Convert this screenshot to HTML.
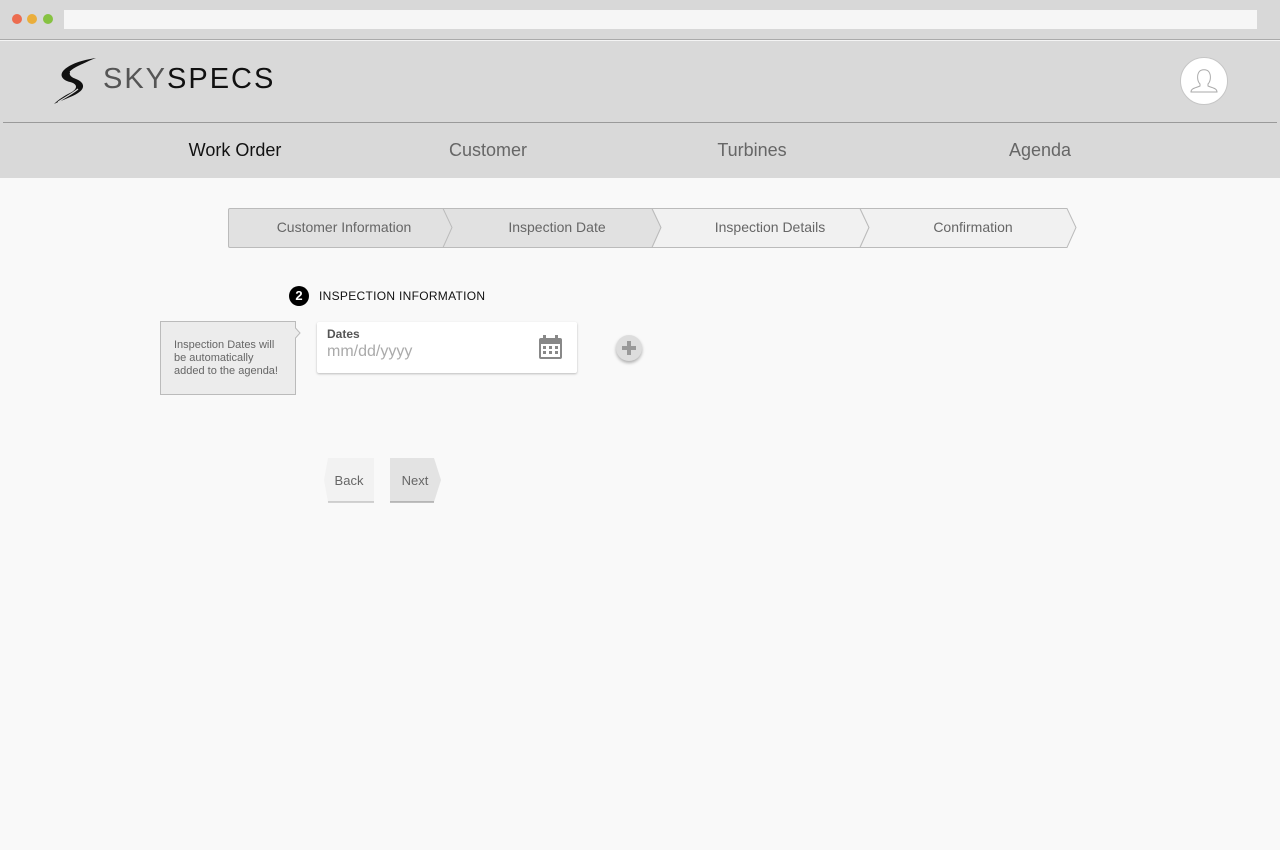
<!DOCTYPE html>
<html><head><meta charset="utf-8"><style>
*{margin:0;padding:0;box-sizing:border-box}
body{width:1280px;height:850px;background:#f9f9f9;font-family:"Liberation Sans",Arial,sans-serif;position:relative;overflow:hidden}
.chrome{position:absolute;left:0;top:0;width:1280px;height:40px;background:#d8d8d8;border-bottom:1px solid #aaa}
.dot{position:absolute;top:14px;width:10px;height:10px;border-radius:50%}
.url{position:absolute;left:64px;top:10px;width:1193px;height:19px;background:#f6f6f6}
.hdr{position:absolute;left:0;top:40px;width:1280px;height:138px;background:#d9d9d9;border-top:1px solid #f4f4f4}
.div{position:absolute;left:3px;top:122px;width:1274px;height:1px;background:#9a9a9a}
.nav{position:absolute;top:140px;font-size:18px;color:#666;transform:translateX(-50%)}
.t{position:absolute}
</style></head><body>
<div class="chrome">
<div class="dot" style="left:12px;background:#ec6c4f"></div>
<div class="dot" style="left:27px;background:#eaae3b"></div>
<div class="dot" style="left:43px;background:#86c241"></div>
<div class="url"></div>
</div>
<div class="hdr"></div>
<svg class="t" style="left:52px;top:56px" width="46" height="50" viewBox="0 0 46 50">
<path d="M44 2 C30 4 18 8 12 14 C7 19 10 24 18 26 C26 28 26 33 18 37 C12 40 6 44 2 48 C10 44 20 41 26 37 C34 32 32 26 24 23 C16 20 16 16 22 13 C28 9 36 5 44 2Z" fill="#111"/>
<path d="M40 6 C30 8 22 12 18 16" stroke="#d9d9d9" stroke-width="1.2" fill="none"/>
<path d="M26 33 C20 38 12 42 6 46" stroke="#d9d9d9" stroke-width="1.2" fill="none"/>
</svg>
<div class="t" style="left:103px;top:63px;font-size:29px;letter-spacing:2px;color:#555;font-weight:300">SKY<span style="color:#111;font-weight:normal">SPECS</span></div>
<div class="t" style="left:1180px;top:57px;width:48px;height:48px;border-radius:50%;background:#fff;border:1px solid #c6c6c6"></div>
<svg class="t" style="left:1180px;top:57px" width="48" height="48" viewBox="0 0 48 48"><path d="M20 27 C17 24 17 18 19 15 C21 12 27 12 29 15 C31 18 31 24 28 27 L28 29 C32 31 37 31 37 35 L11 35 C11 31 16 31 20 29Z" fill="none" stroke="#aaa" stroke-width="1"/></svg>
<div class="div"></div>
<div class="nav" style="left:235px;color:#111">Work Order</div>
<div class="nav" style="left:488px">Customer</div>
<div class="nav" style="left:752px">Turbines</div>
<div class="nav" style="left:1040px">Agenda</div>
<svg class="t" style="left:227px;top:207px" width="852" height="42" viewBox="0 0 852 42">
<path d="M1.5 3 Q1.5 1.5 3 1.5 L425 1.5 L434 20.5 L425 40.5 L3 40.5 Q1.5 40.5 1.5 39Z" fill="#e1e1e1" stroke="#bbb"/>
<path d="M216 1.5 L425 1.5 L434 20.5 L425 40.5 L216 40.5 L225 20.5Z" fill="#e1e1e1" stroke="#bbb"/>
<path d="M425 1.5 L633 1.5 L642 20.5 L633 40.5 L425 40.5 L434 20.5Z" fill="#f1f1f1" stroke="#bbb"/>
<path d="M633 1.5 L840 1.5 L849 20.5 L840 40.5 L633 40.5 L642 20.5Z" fill="#f1f1f1" stroke="#bbb"/>
<g font-family="Liberation Sans,Arial,sans-serif" font-size="14" fill="#666" text-anchor="middle">
<text x="117" y="25">Customer Information</text>
<text x="330" y="25">Inspection Date</text>
<text x="543" y="25">Inspection Details</text>
<text x="746" y="25">Confirmation</text></g>
</svg>
<div class="t" style="left:289px;top:286px;width:20px;height:20px;border-radius:50%;background:#000;color:#fff;font-size:13px;font-weight:bold;text-align:center;line-height:20px">2</div>
<div class="t" style="left:319px;top:289px;font-size:12px;letter-spacing:.3px;color:#111">INSPECTION INFORMATION</div>
<svg class="t" style="left:160px;top:321px" width="142" height="75" viewBox="0 0 142 75"><path d="M0.5 0.5 L135.5 0.5 L135.5 7 L140 12 L135.5 17 L135.5 73.5 L0.5 73.5Z" fill="#ececec" stroke="#bbb"/></svg>
<div class="t" style="left:174px;top:339px;font-size:11px;line-height:13px;color:#666;width:113px">Inspection Dates will be automatically added to the agenda!</div>
<div class="t" style="left:317px;top:322px;width:260px;height:51px;background:#fff;box-shadow:0 1px 2px rgba(0,0,0,.25);border-radius:2px"></div>
<div class="t" style="left:327px;top:327px;font-size:12px;font-weight:bold;color:#555">Dates</div>
<div class="t" style="left:327px;top:343px;font-size:16px;color:#aaa">mm/dd/yyyy</div>
<svg class="t" style="left:538px;top:334px" width="26" height="26" viewBox="0 0 26 26"><rect x="1" y="4" width="23" height="21" rx="2" fill="#888"/><rect x="5" y="1" width="3" height="6" fill="#888"/><rect x="17" y="1" width="3" height="6" fill="#888"/><rect x="3" y="10" width="19" height="13" fill="#fff"/><g fill="#888"><rect x="5" y="12" width="3" height="3"/><rect x="11" y="12" width="3" height="3"/><rect x="17" y="12" width="3" height="3"/><rect x="5" y="17" width="3" height="3"/><rect x="11" y="17" width="3" height="3"/><rect x="17" y="17" width="3" height="3"/></g></svg>
<div class="t" style="left:616px;top:335px;width:26px;height:26px;border-radius:50%;background:#ddd;box-shadow:0 2px 3px rgba(0,0,0,.3)"></div>
<div class="t" style="left:622px;top:346px;width:14px;height:4px;background:#999"></div>
<div class="t" style="left:627px;top:341px;width:4px;height:14px;background:#999"></div>
<svg class="t" style="left:322px;top:457px" width="122" height="48" viewBox="0 0 122 48">
<path d="M6 1 L52 1 L52 45 L6 45 L2 23Z" fill="#f2f2f2"/><path d="M6 45 L52 45" stroke="#aaa"/>
<path d="M68 1 L112 1 L119 23 L112 45 L68 45Z" fill="#e3e3e3"/><path d="M68 45 L112 45" stroke="#888"/>
<g font-family="Liberation Sans,Arial,sans-serif" font-size="13" fill="#666" text-anchor="middle"><text x="27" y="28">Back</text><text x="93" y="28">Next</text></g>
</svg>
</body></html>
